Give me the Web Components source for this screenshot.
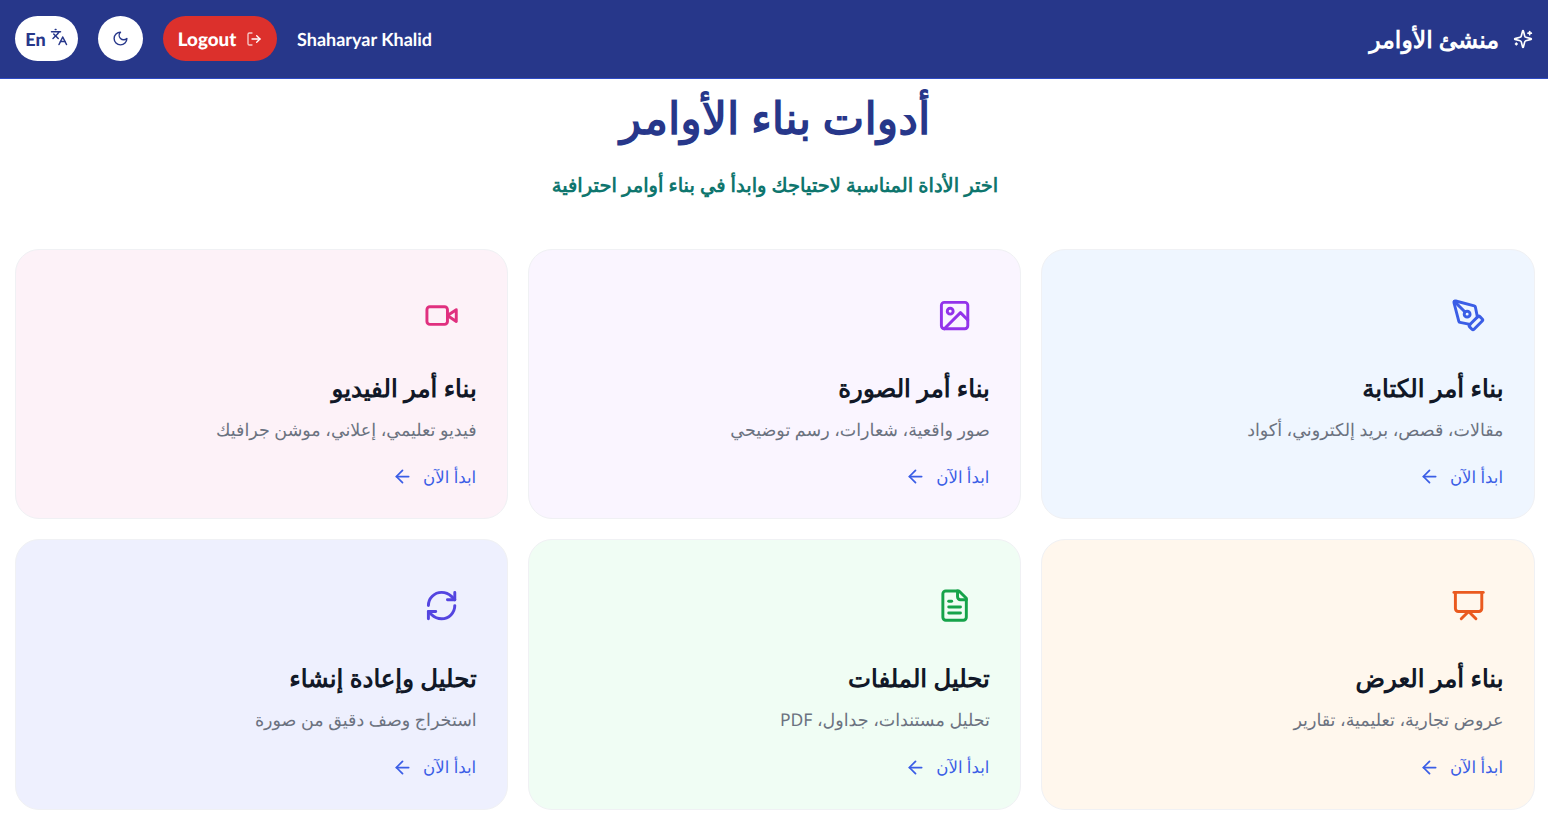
<!DOCTYPE html>
<html lang="ar" dir="rtl">
<head>
<meta charset="utf-8">
<title>منشئ الأوامر</title>
<style>
  html, body { margin: 0; background: #fff; }
  body { font-family: "Noto Sans", sans-serif; text-rendering: geometricPrecision; }
</style>
</head>
<body>
<prompt-header></prompt-header>
<prompt-page>
  <tool-card tone="#eff6ff" accent="#3b5ee6" icon="pen" heading="بناء أمر الكتابة" text="مقالات، قصص، بريد إلكتروني، أكواد"></tool-card>
  <tool-card tone="#faf5ff" accent="#9333ea" icon="image" heading="بناء أمر الصورة" text="صور واقعية، شعارات، رسم توضيحي"></tool-card>
  <tool-card tone="#fdf2f8" accent="#e0307f" icon="video" heading="بناء أمر الفيديو" text="فيديو تعليمي، إعلاني، موشن جرافيك"></tool-card>
  <tool-card tone="#fff7ed" accent="#ea5a1f" icon="slides" heading="بناء أمر العرض" text="عروض تجارية، تعليمية، تقارير"></tool-card>
  <tool-card tone="#f0fdf4" accent="#16a34a" icon="file" heading="تحليل الملفات" text="تحليل مستندات، جداول، PDF"></tool-card>
  <tool-card tone="#eef0fe" accent="#5445e0" icon="refresh" heading="تحليل وإعادة إنشاء" text="استخراج وصف دقيق من صورة"></tool-card>
</prompt-page>

<script>
const ICONS = {
  pen: '<path d="M15.707 21.293a1 1 0 0 1-1.414 0l-1.586-1.586a1 1 0 0 1 0-1.414l5.586-5.586a1 1 0 0 1 1.414 0l1.586 1.586a1 1 0 0 1 0 1.414z"/><path d="m18 13-1.375-6.874a1 1 0 0 0-.746-.776L3.235 2.028a1 1 0 0 0-1.207 1.207L5.35 15.879a1 1 0 0 0 .776.746L13 18"/><path d="m2.3 2.3 7.286 7.286"/><circle cx="11" cy="11" r="2"/>',
  image: '<rect x="3" y="3" width="18" height="18" rx="2"/><circle cx="9" cy="9" r="2"/><path d="M21 15l-5-5L5 21"/>',
  video: '<path d="m22 8-6 4 6 4V8Z"/><rect x="2" y="6" width="14" height="12" rx="2"/>',
  slides: '<path d="M2 3h20"/><path d="M21 3v11a2 2 0 0 1-2 2H5a2 2 0 0 1-2-2V3"/><path d="m7 21 5-5 5 5"/>',
  file: '<path d="M15 2H6a2 2 0 0 0-2 2v16a2 2 0 0 0 2 2h12a2 2 0 0 0 2-2V7Z"/><path d="M14 2v4a2 2 0 0 0 2 2h4"/><path d="M10 9H8"/><path d="M16 13H8"/><path d="M16 17H8"/>',
  refresh: '<path d="M3 12a9 9 0 0 1 9-9 9.75 9.75 0 0 1 6.74 2.74L21 8"/><path d="M21 3v5h-5"/><path d="M21 12a9 9 0 0 1-9 9 9.75 9.75 0 0 1-6.74-2.74L3 16"/><path d="M8 16H3v5"/>',
  sparkles: '<path d="M9.937 15.5A2 2 0 0 0 8.5 14.063l-6.135-1.582a.5.5 0 0 1 0-.962L8.5 9.936A2 2 0 0 0 9.937 8.5l1.582-6.135a.5.5 0 0 1 .963 0L14.063 8.5A2 2 0 0 0 15.5 9.937l6.135 1.581a.5.5 0 0 1 0 .964L15.5 14.063a2 2 0 0 0-1.437 1.437l-1.582 6.135a.5.5 0 0 1-.963 0z"/><path d="M20 3v4"/><path d="M22 5h-4"/><path d="M4 17v2"/><path d="M5 18H3"/>',
  languages: '<path d="m5 8 6 6"/><path d="m4 14 6-6 2-3"/><path d="M2 5h12"/><path d="M7 2h1"/><path d="m22 22-5-10-5 10"/><path d="M14 18h6"/>',
  moon: '<path d="M12 3a6 6 0 0 0 9 9 9 9 0 1 1-9-9Z"/>',
  logout: '<path d="M9 21H5a2 2 0 0 1-2-2V5a2 2 0 0 1 2-2h4" opacity=".75"/><path d="m16 17 5-5-5-5"/><path d="M21 12H9"/>',
  arrow: '<path d="m12 19-7-7 7-7"/><path d="M19 12H5"/>'
};

class UiIcon extends HTMLElement {
  static observedAttributes = ['name'];

  constructor() {
    super();
    this.attachShadow({mode: 'open'});
  }

  connectedCallback() {
    this.#render();
  }

  attributeChangedCallback() {
    this.#render();
  }

  #render() {
    const size = this.getAttribute('size') || 24;
    this.shadowRoot.innerHTML = `
    <style>
    :host { display: inline-flex; flex: none; line-height: 0; }
    svg { fill: none; stroke: currentColor; stroke-width: 2; stroke-linecap: round; stroke-linejoin: round; }
    </style>
    <svg width="${size}" height="${size}" viewBox="0 0 24 24">${ICONS[this.getAttribute('name')] || ''}</svg>
    `;
  }
}

class PromptHeader extends HTMLElement {
  constructor() {
    super();
    const shadowRoot = this.attachShadow({mode: 'open'});
    shadowRoot.innerHTML = `
    <style>
    :host {
      display: flex;
      align-items: center;
      justify-content: space-between;
      box-sizing: border-box;
      height: 79px;
      padding: 0 15px 1px;
      background: #27378a;
      border-bottom: 1px solid #2f4bc4;
      color: #fff;
    }
    .brand { display: flex; align-items: center; gap: 14px; font-size: 23.5px; font-weight: 600; }
    .actions { display: flex; align-items: center; direction: ltr; font-family: Lato, "Noto Sans", sans-serif; }
    .pill {
      display: flex;
      align-items: center;
      justify-content: center;
      box-sizing: border-box;
      height: 45px;
      border-radius: 23px;
      font-size: 18px;
      font-weight: 900;
    }
    .lang { width: 63px; gap: 4px; background: #fff; color: #27378a; }
    .lang ui-icon { margin-top: -3px; }
    .theme { width: 45px; margin-left: 20px; background: #fff; color: #27378a; }
    .logout { width: 114px; margin-left: 20px; gap: 10px; background: #dc302c; color: #fff; font-size: 18.8px; }
    .logout span { padding-top: 2px; }
    .name { margin-left: 20px; font-size: 18px; font-weight: 700; }
    </style>
    <div class="brand"><ui-icon name="sparkles" size="20"></ui-icon><span>منشئ الأوامر</span></div>
    <div class="actions">
      <div class="pill lang"><span>En</span><ui-icon name="languages" size="18"></ui-icon></div>
      <div class="pill theme"><ui-icon name="moon" size="17"></ui-icon></div>
      <div class="pill logout"><span>Logout</span><ui-icon name="logout" size="16"></ui-icon></div>
      <span class="name">Shaharyar Khalid</span>
    </div>
    `;
  }
}

class PromptPage extends HTMLElement {
  constructor() {
    super();
    const shadowRoot = this.attachShadow({mode: 'open'});
    shadowRoot.innerHTML = `
    <style>
    :host { display: block; padding: 0 13px 0 15px; }
    header { text-align: center; padding-top: 9px; margin-bottom: 50px; }
    h1 { margin: 0; font-size: 44.4px; line-height: 60px; font-weight: 700; color: #27378a; }
    p { margin: 23px 0 0; font-size: 19.5px; line-height: 28px; font-weight: 600; color: #0f766e; }
    .grid { display: grid; grid-template-columns: 493.6px 1fr 1fr; gap: 20px; }
    </style>
    <header>
      <h1>أدوات بناء الأوامر</h1>
      <p>اختر الأداة المناسبة لاحتياجك وابدأ في بناء أوامر احترافية</p>
    </header>
    <div class="grid"><slot></slot></div>
    `;
  }
}

class ToolCard extends HTMLElement {
  constructor() {
    super();
    const shadowRoot = this.attachShadow({mode: 'open'});
    shadowRoot.innerHTML = `
    <style>
    :host {
      display: block;
      box-sizing: border-box;
      height: 270.4px;
      padding: 30px 30.5px 0 32px;
      border: 1px solid #f0f1f4;
      border-radius: 24px;
      background: var(--tone);
    }
    .icon { display: flex; align-items: center; justify-content: center; width: 70.4px; height: 70.4px; color: var(--accent); }
    h2 { margin: 20.6px 0 0; font-size: 24.4px; line-height: 36px; font-weight: 600; color: #111827; }
    p { margin: 11px 0 0; font-size: 17.5px; line-height: 24px; color: #6b7280; }
    .go { display: flex; align-items: center; gap: 10px; margin-top: 23px; padding-right: 0.5px; font-size: 16.6px; line-height: 24px; font-weight: 500; color: #3b5ee6; }
    </style>
    <div class="icon"><ui-icon id="icon" size="35.2"></ui-icon></div>
    <h2></h2>
    <p></p>
    <div class="go"><span>ابدأ الآن</span><ui-icon name="arrow" size="21"></ui-icon></div>
    `;
  }

  connectedCallback() {
    this.style.setProperty('--tone', this.getAttribute('tone'));
    this.style.setProperty('--accent', this.getAttribute('accent'));
    this.shadowRoot.querySelector('#icon').setAttribute('name', this.getAttribute('icon'));
    this.shadowRoot.querySelector('h2').textContent = this.getAttribute('heading');
    this.shadowRoot.querySelector('p').textContent = this.getAttribute('text');
  }
}

customElements.define('ui-icon', UiIcon);
customElements.define('prompt-header', PromptHeader);
customElements.define('prompt-page', PromptPage);
customElements.define('tool-card', ToolCard);
</script>
</body>
</html>
